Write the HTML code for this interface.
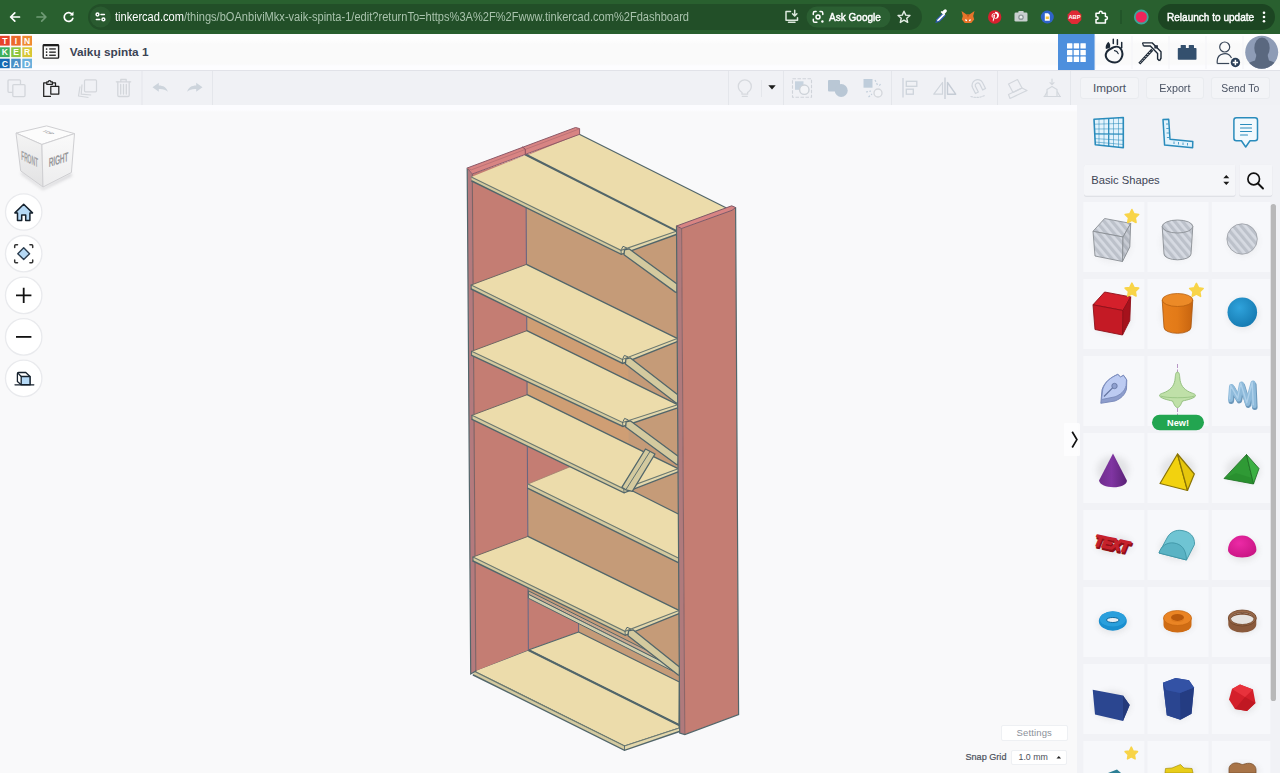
<!DOCTYPE html>
<html lang="en">
<head>
<meta charset="utf-8">
<title>Vaikų spinta 1 - Tinkercad</title>
<style>
*{box-sizing:border-box;margin:0;padding:0}
html,body{width:1280px;height:773px;overflow:hidden;background:#f8f9fb;font-family:"Liberation Sans","DejaVu Sans",sans-serif;}
.abs{position:absolute}
#chrome{position:absolute;left:0;top:0;width:1280px;height:34px;background:#29602f;}
#urlpill{position:absolute;left:88px;top:4px;width:834px;height:26px;border-radius:13px;background:#224f28;}
#urltext{position:absolute;left:115px;top:8px;font-size:12.5px;line-height:18px;color:#fff;white-space:nowrap;transform-origin:0 50%;transform:scaleX(0.886)}
#urltext span{color:#a9c3ad}
#header{position:absolute;left:0;top:34px;width:1280px;height:37px;background:linear-gradient(#fff 0,#fff 4px,#fafafa 10px,#fafafa 30px,#fdfdff 32px,#fdfdff 36px);border-bottom:1px solid #e1e2e8;}
#title{position:absolute;left:69.8px;top:44px;font-size:11.8px;font-weight:bold;color:#3b4354;line-height:16px;white-space:nowrap}
#toolbar{position:absolute;left:0;top:71px;width:1280px;height:34px;background:#f0f1f5;}
.vsep{position:absolute;top:71px;width:1px;height:34px;background:#e6e8ed}
#canvas{position:absolute;left:0;top:105px;width:1077px;height:668px;background:linear-gradient(#fcfcff 0,#fcfcff 5px,#f9f9fa 7px,#f9f9fa 100%);}
#rpanel{position:absolute;left:1077px;top:105px;width:203px;height:668px;background:#f1f2f6;}
.btn{position:absolute;top:77px;height:22px;border:1px solid #e9ebef;border-radius:3px;background:#f3f4f7;font-size:11.7px;color:#4a5263;text-align:center;line-height:20px;}
.btn span{display:inline-block}
.cell{position:absolute;width:61px;height:72px;background:#f7f8fa;}
.circ{position:absolute;left:9px;width:30px;height:30px;border-radius:15px;background:#fff;border:1px solid #e9ebee;box-shadow:0 0 2px rgba(0,0,0,0.05)}
</style>
</head>
<body>
<!-- CHROME BAR -->
<div id="chrome"></div>
<div id="urlpill"></div>
<div id="urltext">tinkercad.com<span>/things/bOAnbiviMkx-vaik-spinta-1/edit?returnTo=https%3A%2F%2Fwww.tinkercad.com%2Fdashboard</span></div>
<svg class="abs" style="left:0;top:0" width="1280" height="34" viewBox="0 0 1280 34">
 <!-- back -->
 <g fill="none" stroke="#fff" stroke-width="1.7" stroke-linecap="round" stroke-linejoin="round">
  <path d="M19.5 17H10.8M14.8 12.8L10.6 17l4.2 4.2"/>
  <path d="M37 17h8.7M41.7 12.8l4.2 4.2-4.2 4.2" stroke="#6f9a75"/>
  <path d="M72.3 14.6a4.400 4.400 0 1 0 0.5 3.800"/>
 </g>
 <path d="M73.500 11.600v3.800h-3.800z" fill="#fff"/>
 <!-- site info -->
 <circle cx="100.5" cy="17" r="10.5" fill="#2a5b30"/>
 <g fill="none" stroke="#fff" stroke-width="1.5" stroke-linecap="round">
  <circle cx="97.500" cy="14.500" r="1.400"/><path d="M101 14.500h3.400"/>
  <circle cx="103.400" cy="19.400" r="1.400"/><path d="M96.400 19.400H99.800"/>
 </g>
 <!-- install -->
 <g fill="none" stroke="#dbe7dc" stroke-width="1.5" stroke-linecap="round" stroke-linejoin="round">
  <path d="M790.5 11.5H786v8.7h11.5v-2.5M788.5 22.3h6.5"/>
  <path d="M794.7 10.3v5.2M792.5 13.7l2.2 2.2 2.2-2.2"/>
 </g>
 <!-- ask google chip -->
 <rect x="806.5" y="6.5" width="84" height="21" rx="10.5" fill="#2b5f32"/>
 <g fill="none" stroke="#fff" stroke-width="1.5" stroke-linecap="round" stroke-linejoin="round">
  <path d="M813.3 14.5v-1.3a1.6 1.6 0 0 1 1.6-1.6h1.2M820 11.6h1.2a1.6 1.6 0 0 1 1.6 1.6v1.3M813.3 19.3v1.4a1.6 1.6 0 0 0 1.6 1.6h2"/>
  <circle cx="818" cy="17" r="2"/>
 </g>
 <circle cx="822.4" cy="21.5" r="1.2" fill="#fff"/>
 <!-- star -->
 <path d="M904 11.2l1.75 3.9 4.2.4-3.2 2.8.95 4.1-3.7-2.2-3.7 2.2.95-4.1-3.2-2.8 4.2-.4z" fill="none" stroke="#e4ede5" stroke-width="1.4" stroke-linejoin="round"/>
 <!-- eyedropper -->
 <g>
  <path d="M936 22.3l1-3 6-6 2.1 2.1-6 6z" fill="#fff" stroke="#2a55a8" stroke-width="1.1"/>
  <path d="M942.3 11.6l1.8-1.8a1.6 1.6 0 0 1 2.3 2.3l-1.8 1.8 0.6 0.6-1.1 1.1-3.5-3.5 1.1-1.1z" fill="#fff"/>
 </g>
 <!-- metamask -->
 <g>
  <path d="M961.5 11l5 3.4h3l5-3.4-1.3 5 1 3.6-3 3.4h-6.4l-3-3.4 1-3.6z" fill="#e8742a"/>
  <path d="M965 19.3l2 .4v1.5l-1.6-.4zM971 19.3l-2 .4v1.5l1.6-.4z" fill="#fff"/>
  <path d="M966.5 14.4h3l-1.5 3z" fill="#c4571b"/>
 </g>
 <!-- pinterest -->
 <circle cx="994.7" cy="17" r="6.7" fill="#d8202f"/>
 <path d="M994.9 13c-2.2 0-3.3 1.5-3.3 2.9 0 .8.3 1.500 1 1.800.1 0 .2 0 .2-.1l.1-.5c0-.1 0-.2-.1-.3-.2-.3-.3-.600-.3-1 0-1.300 1-2.400 2.500-2.400 1.300 0 2.100.8 2.100 1.900 0 1.500-.6 2.700-1.600 2.700-.5 0-.9-.4-.8-1 .1-.6.4-1.300.4-1.700 0-.4-.2-.7-.7-.7-.5 0-1 .6-1 1.300 0 .5.2.8.2.8l-.7 2.900c-.2.900 0 1.900 0 2l.2-.1c.1-.1.800-1.100 1-1.900l.4-1.500c.2.400.8.700 1.400.700 1.800 0 3.100-1.700 3.100-3.900-.1-1.600-1.500-3.200-3.700-3.200z" fill="#fff"/>
 <!-- camera -->
 <g>
  <rect x="1014.5" y="12.6" width="13" height="9" rx="1.3" fill="#c9cfd0"/>
  <rect x="1018.3" y="11" width="5.4" height="2.400" rx=".8" fill="#c9cfd0"/>
  <circle cx="1021" cy="17.200" r="2.800" fill="#8f9a9b"/><circle cx="1021" cy="17.200" r="1.400" fill="#e8ecec"/>
 </g>
 <!-- docs -->
 <circle cx="1047.300" cy="17" r="6.500" fill="#2f63c9"/>
 <path d="M1044.800 13.200h3.300l1.700 1.700v5.900h-5z" fill="#fff"/>
 <rect x="1045.700" y="16.500" width="3.200" height="2.600" fill="#f4c542"/>
 <!-- ABP -->
 <path d="M1071.700 10.500h5.600l4 4v5.600l-4 4h-5.600l-4-4v-5.600z" fill="#e02a35"/>
 <text x="1074.500" y="19.300" font-size="5.800" font-weight="bold" fill="#fff" text-anchor="middle" font-family="Liberation Sans,sans-serif">ABP</text>
 <!-- puzzle -->
 <path d="M1096 13.300h3.200v-.6a1.500 1.500 0 0 1 3 0v.6h3.200v3.300h.5a1.500 1.500 0 0 1 0 3h-.5v3.300H1096v-3.300h.7a1.400 1.400 0 0 0 0-2.800H1096z" fill="none" stroke="#fff" stroke-width="1.500" stroke-linejoin="round"/>
 <!-- sep -->
 <rect x="1120.500" y="10" width="1" height="14" fill="#1d4a24"/>
 <!-- profile -->
 <circle cx="1141.300" cy="17" r="6.500" fill="#f0245a" stroke="#3fa49a" stroke-width="1.800"/>
 <!-- relaunch pill -->
 <rect x="1158" y="4" width="117" height="26" rx="13" fill="#1c4522"/>
 <circle cx="1264" cy="12.700" r="1.300" fill="#fff"/><circle cx="1264" cy="17" r="1.300" fill="#fff"/><circle cx="1264" cy="21.300" r="1.300" fill="#fff"/>
</svg>
<div id="askg" class="abs" style="left:829px;top:8px;font-size:11px;line-height:18px;color:#fff;white-space:nowrap;-webkit-text-stroke:0.45px #fff;transform-origin:0 50%;transform:scaleX(0.913)">Ask Google</div>
<div id="relaunch" class="abs" style="left:1166.5px;top:8px;font-size:11px;line-height:18px;color:#fff;white-space:nowrap;-webkit-text-stroke:0.45px #fff;transform-origin:0 50%;transform:scaleX(0.913)">Relaunch to update</div>


<!-- HEADER -->
<div id="header"></div>
<div id="title">Vaikų spinta 1</div>
<svg class="abs" style="left:0;top:34px" width="1280" height="37" viewBox="0 34 1280 37" font-family="Liberation Sans,sans-serif">
 <!-- logo -->
 <g>
  <rect x="0" y="35.800" width="9.700" height="9.800" fill="#e8432b"/><rect x="11.200" y="35.800" width="9.500" height="9.800" fill="#ec6a2c"/><rect x="22.300" y="35.800" width="9.700" height="9.800" fill="#f08b31"/>
  <rect x="0" y="47.300" width="9.700" height="9.800" fill="#3eae5e"/><rect x="11.200" y="47.300" width="9.500" height="9.800" fill="#8dc53e"/><rect x="22.300" y="47.300" width="9.700" height="9.800" fill="#d8c734"/>
  <rect x="0" y="58.700" width="9.700" height="9.500" fill="#156ab4"/><rect x="11.200" y="58.700" width="9.500" height="9.500" fill="#4a8fc6"/><rect x="22.300" y="58.700" width="9.700" height="9.500" fill="#6bb0dc"/>
  <g font-size="8.600" font-weight="bold" fill="#fff" text-anchor="middle">
   <text x="4.900" y="43.900">T</text><text x="16" y="43.900">I</text><text x="27.200" y="43.900">N</text>
   <text x="4.900" y="55.400">K</text><text x="16" y="55.400">E</text><text x="27.200" y="55.400">R</text>
   <text x="4.900" y="66.600">C</text><text x="16" y="66.600">A</text><text x="27.200" y="66.600">D</text>
  </g>
 </g>
 <!-- list icon -->
 <g>
  <rect x="43.200" y="44.700" width="15.400" height="13.400" rx="0.800" fill="none" stroke="#1f1f1f" stroke-width="1.400"/>
  <rect x="43.200" y="44.400" width="15.400" height="1.900" fill="#1f1f1f"/>
  <g fill="#1f1f1f"><circle cx="46.600" cy="49" r="0.850"/><circle cx="46.600" cy="52.100" r="0.850"/><circle cx="46.600" cy="55.200" r="0.850"/>
  <rect x="49.200" y="48.300" width="6.600" height="1.300"/><rect x="49.200" y="51.500" width="6.600" height="1.300"/><rect x="49.200" y="54.600" width="6.600" height="1.300"/></g>
 </g>
 <!-- right buttons -->
 <rect x="1058" y="34" width="36.600" height="36" fill="#4d8fdd"/>
 <g fill="#fff">
  <rect x="1067" y="43.200" width="5.400" height="5.400" rx=".5"/><rect x="1073.700" y="43.200" width="5.400" height="5.400" rx=".5"/><rect x="1080.400" y="43.200" width="5.400" height="5.400" rx=".5"/>
  <rect x="1067" y="49.900" width="5.400" height="5.400" rx=".5"/><rect x="1073.700" y="49.900" width="5.400" height="5.400" rx=".5"/><rect x="1080.400" y="49.900" width="5.400" height="5.400" rx=".5"/>
  <rect x="1067" y="56.600" width="5.400" height="5.400" rx=".5"/><rect x="1073.700" y="56.600" width="5.400" height="5.400" rx=".5"/><rect x="1080.400" y="56.600" width="5.400" height="5.400" rx=".5"/>
 </g>
 <g fill="#f3f4f7"><rect x="1095" y="36" width="1" height="33"/><rect x="1131.500" y="36" width="1" height="33"/><rect x="1168.500" y="36" width="1" height="33"/><rect x="1205.500" y="36" width="1" height="33"/><rect x="1242.500" y="36" width="1" height="33"/></g>
 <!-- sim lab (apple falling) -->
 <g fill="none" stroke="#1c2836" stroke-linecap="round" stroke-linejoin="round">
  <path d="M1113.900 47.200c2.600-1.200 5.800-.4 7.200 2 1.500 2.700 1.700 6 .4 8.700-1.200 2.600-3.700 4.500-6.500 4.500-2.700 0-5.800-.9-7.600-3-1.800-2.100-2-5.100-.7-7.400 1.400-2.500 4.400-3.500 7.200-4.800z" stroke-width="2"/>
  <path d="M1113.300 39.300v4.300M1117.400 39.800v4.800M1121.700 42.500v5.300" stroke-width="1.500"/>
  <path d="M1114.500 50.600c1.700.3 3.100 1.400 3.700 3" stroke-width="1.200"/>
 </g>
 <path d="M1108.300 41.800c2 1.700 2.500 4 1.400 6.200l-3.800 1c-.8-2.600.3-5 2.400-7.200z" fill="#1c2836"/>
 <!-- pickaxe -->
 <g fill="none" stroke="#1c2836">
  <path d="M1140.300 62.600l11-11.800" stroke-width="2.800" stroke-linecap="square"/>
  <path d="M1140.300 62.600l11-11.800" stroke-width="1" stroke="#fff" stroke-dasharray="1.300 1.300"/>
  <path d="M1142.500 42.900h9.800l8.700 8.800v6.500l-1.500 2.600" stroke-width="1.400" stroke-linejoin="miter"/>
  <path d="M1143.500 46h6.800l7.300 7.500v5.500l1.800 1.800" stroke-width="1.400" stroke-linejoin="miter"/>
  <path d="M1142.500 42.900l1 3.100" stroke-width="1.200"/>
 </g>
 <rect x="1154.300" y="45.200" width="3.600" height="3.300" fill="#2a3444"/>
 <!-- brick -->
 <g fill="#34506e"><rect x="1177.800" y="48" width="18.700" height="11.700" rx=".8"/><rect x="1180.700" y="45" width="5.200" height="4" rx=".5"/><rect x="1188.800" y="45" width="5.200" height="4" rx=".5"/></g>
 <!-- user plus -->
 <g fill="none" stroke="#3a4759" stroke-width="1.200">
  <circle cx="1224.700" cy="47" r="5"/>
  <path d="M1217.200 63.500v-2.500a7.500 7.500 0 0 1 14.300-3"/>
  <path d="M1217.200 63.500h12"/>
 </g>
 <circle cx="1235.400" cy="62.500" r="4.700" fill="#2a3e57"/>
 <path d="M1232.700 62.500h5.400M1235.400 59.800v5.400" stroke="#fff" stroke-width="1.500" fill="none"/>
 <!-- avatar -->
 <defs><clipPath id="avc"><circle cx="1261.700" cy="52.200" r="16.500"/></clipPath></defs>
 <circle cx="1261.700" cy="52.200" r="16.500" fill="#8e9cb6"/>
 <g clip-path="url(#avc)" fill="#5a687f">
  <ellipse cx="1262" cy="48" rx="7.700" ry="10.500"/>
  <path d="M1256.500 55h11l1.500 5.500c4 1.300 8 3 10 6v6h-34v-6c2-3 6-4.700 10-6z"/>
 </g>
</svg>


<!-- TOOLBAR -->
<div id="toolbar"></div>
<svg class="abs" style="left:0;top:71px" width="1280" height="34" viewBox="0 71 1280 34">
 <g fill="#e4e6eb">
  <rect x="141.500" y="71" width="1" height="34"/><rect x="212" y="71" width="1" height="34"/>
  <rect x="728" y="71" width="1" height="34"/><rect x="783" y="71" width="1" height="34"/><rect x="891" y="71" width="1" height="34"/><rect x="997" y="71" width="1" height="34"/><rect x="1070" y="71" width="1" height="34"/>
  <rect x="761" y="80" width="1" height="17"/>
 </g>
 <!-- copy -->
 <g fill="#f0f1f5" stroke="#d3d6db" stroke-width="1.300" stroke-linejoin="round">
  <rect x="8" y="79.800" width="12.500" height="12.500" rx="1"/><rect x="12.800" y="84.600" width="12.200" height="12" rx="1"/>
 </g>
 <!-- paste -->
 <g fill="none" stroke="#222" stroke-width="1.250" stroke-linejoin="round">
  <path d="M46.800 82.800H43.700v13.600h7.300"/><path d="M52.300 82.800h3.200v3.200"/>
  <path d="M46.800 84.300v-2.400h1.500a1.300 1.300 0 0 1 2.600 0h1.500v2.400z"/>
  <rect x="50.800" y="86.300" width="8" height="7.800" fill="#f0f1f5"/>
 </g>
 <!-- duplicate -->
 <g fill="#f0f1f5" stroke="#d3d6db" stroke-width="1.200" stroke-linejoin="round">
  <path d="M80 86.500l-1.500 9.500 10 1.500"/><path d="M82 84.500l-.8 9.700 10 .8" />
  <rect x="84.500" y="79.800" width="12" height="12" rx="1"/>
 </g>
 <!-- trash -->
 <g fill="none" stroke="#d3d6db" stroke-width="1.300" stroke-linejoin="round" stroke-linecap="round">
  <path d="M116.300 81.800h14.400"/><path d="M120.800 81.500v-2h5.400v2"/>
  <path d="M117.800 82v13.300a1.200 1.200 0 0 0 1.200 1.200h9a1.200 1.200 0 0 0 1.200-1.200V82"/>
  <path d="M120.700 84.500v9.500M123.500 84.500v9.500M126.300 84.500v9.500"/>
 </g>
 <!-- undo / redo -->
 <path d="M152.500 87.300l6.300-4.500v2.800c4.500 0 8 2 9 6.200-2.300-2.300-5-3-9-2.800v2.800z" fill="#cdd4dc"/>
 <path d="M202.500 87.300l-6.300-4.500v2.800c-4.500 0-8 2-9 6.200 2.300-2.300 5-3 9-2.800v2.800z" fill="#cdd4dc"/>
 <!-- bulb -->
 <g fill="none" stroke="#d6d9de" stroke-width="1.300" stroke-linecap="round">
  <path d="M742 92.500c-2.300-1.500-3.700-3.500-3.700-6.200a6.500 6.500 0 0 1 13 0c0 2.700-1.400 4.700-3.700 6.200v1.700h-5.600z"/>
  <path d="M742.300 96.300h5"/>
 </g>
 <path d="M768.300 85.200h7.400l-3.700 4.200z" fill="#1b1b1b"/>
 <!-- group -->
 <rect x="792.500" y="78.700" width="19" height="18.500" fill="none" stroke="#d0d4da" stroke-width="1.100" stroke-dasharray="3.500 1.500"/>
 <rect x="795" y="81.300" width="8.500" height="8.500" fill="#c7d3df"/>
 <circle cx="804.300" cy="89.700" r="4.700" fill="#f3f4f7" stroke="#cdd2d8" stroke-width="1.400"/>
 <!-- union -->
 <rect x="828" y="80" width="12" height="11.500" rx="1" fill="#b9c7d5"/><circle cx="841.200" cy="90.500" r="6.500" fill="#b9c7d5"/>
 <!-- ungroup -->
 <rect x="863.500" y="79" width="9" height="8.700" fill="#bfcddb"/>
 <circle cx="878" cy="93" r="4" fill="#f3f4f7" stroke="#d3d6db" stroke-width="1.300"/>
 <g stroke="#c3cfdb" stroke-width="1.200" stroke-dasharray="2 1.500" fill="none"><path d="M875 80l2.500 5M880.500 84l-2 3M866 92l5-1M868.500 97l3.500-3"/></g>
 <!-- align -->
 <g fill="none" stroke="#cdd3db" stroke-width="1.300"><path d="M903 78v19.500"/><rect x="906.300" y="81.300" width="10.500" height="5"/><rect x="906.300" y="89.200" width="7" height="5"/></g>
 <!-- mirror -->
 <g fill="none" stroke="#d0d5dc" stroke-width="1.200" stroke-linejoin="round"><path d="M945 77.500v21.500" stroke="#c9cfd7" stroke-width="1.400"/><path d="M942.500 82.500v11.700h-8.700z"/><path d="M947.500 82.500v11.700h8.200z" stroke="#c5ccd5" stroke-width="1.400"/></g>
 <!-- magnet -->
 <g fill="none" stroke="#d0d5dc" stroke-width="1.200" stroke-linecap="round"><path d="M975.500 93.500l-3-6a5.600 5.600 0 0 1 10-5l3 6-2.800 1.400-3-6a2.500 2.500 0 0 0-4.400 2.200l3 6z"/><path d="M971 96.500c4 1.500 9 1.300 13.500-1" stroke-dasharray="1.500 1.500"/></g>
 <!-- cruise -->
 <g fill="none" stroke="#d3d7dd" stroke-width="1.200" stroke-linejoin="round"><path d="M1008.500 84l9-4.500 4.500 8.500-9 4.500z"/><path d="M1022 88l5 2.500-17 8-1.500-4z"/></g>
 <!-- drop -->
 <g fill="none" stroke="#d3d7dd" stroke-width="1.200" stroke-linejoin="round" stroke-linecap="round"><path d="M1052 79v5.500M1050 82.700l2 2 2-2"/><path d="M1047 96v-6.500l5-3 5 3V96"/><path d="M1044 96.500h16.500M1044.500 96.500l2.500-4.500M1060 96.500l-2.500-4.500"/></g>
</svg>
<div class="btn" style="left:1080px;width:59px"><span>Import</span></div>
<div class="btn" style="left:1146px;width:58px"><span style="transform:scaleX(0.92)">Export</span></div>
<div class="btn" style="left:1211px;width:59px"><span style="transform:scaleX(0.89)">Send To</span></div>


<!-- CANVAS -->
<div id="canvas"></div>
<svg class="abs" style="left:0;top:0" width="1280" height="773" viewBox="0 0 1280 773"><polygon points="575.5,134.0 676.5,231.0 679.7,727.0 578.6,632.0" fill="#c59b78"  />
<polygon points="525.9,155.0 575.5,134.0 578.6,632.0 528.4,650.0" fill="#c47d73"  />
<polyline points="578.4,600.0 578.6,632.0" fill="none" stroke="#6a6680" stroke-width="1.0" stroke-linecap="round"/>
<polygon points="528.4,650.0 578.6,632.0 679.4,682.0 679.0,725.0" fill="#ecdcab" stroke="#52666a" stroke-width="1.3" stroke-linejoin="round" />
<polygon points="473.7,671.0 528.4,650.0 679.0,725.0 679.3,728.0 624.5,746.0" fill="#ecdcab" stroke="#52666a" stroke-width="1.3" stroke-linejoin="round" />
<polyline points="528.4,650.0 679.0,725.0" fill="none" stroke="#52666a" stroke-width="2.0" stroke-linecap="round"/>
<polygon points="473.7,671.0 624.5,746.0 624.5,750.3 473.2,675.0" fill="#d4ca9f"  />
<polygon points="624.5,746.0 679.3,728.0 679.3,731.5 624.5,750.3" fill="#e3d7ab"  />
<polyline points="473.7,671.0 624.5,746.0 679.3,728.0" fill="none" stroke="#6c7a72" stroke-width="1.1" stroke-linecap="round"/>
<polyline points="473.2,675.0 624.5,750.3 679.3,731.5" fill="none" stroke="#52666a" stroke-width="1.4" stroke-linecap="round"/>
<polyline points="624.5,746.0 624.5,750.3" fill="none" stroke="#52666a" stroke-width="0.9" stroke-linecap="round"/>
<polygon points="525.9,155.0 676.5,231.0 678.1,473.0 527.1,396.0" fill="#c59b78"  />
<polygon points="527.6,488.0 678.7,562.0 679.3,669.0 528.2,594.0" fill="#c59b78"  />
<polygon points="526.8,316.3 622.4,363.4 628.4,367.6 628.4,380.5 526.8,330.7" fill="#cf9e74"  />
<polygon points="527.1,381.4 622.6,426.4 628.6,430.6 628.6,444.5 527.1,394.7" fill="#cf9e74"  />
<polygon points="472.3,174.0 525.9,155.0 528.4,650.0 475.5,671.0" fill="#c47d73"  />
<polyline points="526.0,180.0 528.4,650.0" fill="none" stroke="#6a6680" stroke-width="1.1" stroke-linecap="round"/>
<polygon points="467.2,168.0 472.3,174.0 475.8,671.0 470.7,674.0" fill="#b47a7d"  />
<polyline points="472.3,174.0 475.8,671.0" fill="none" stroke="#7c6466" stroke-width="1.1" stroke-linecap="round"/>
<polyline points="467.2,168.0 470.7,674.0 475.8,671.0" fill="none" stroke="#52666a" stroke-width="1.2" stroke-linecap="round"/>
<polygon points="528.4,590.8 678.5,666.3 678.5,670.0 528.4,594.3" fill="#c9a78e" stroke="#52666a" stroke-width="1.0" stroke-linejoin="round" />
<polygon points="528.4,594.3 678.5,670.0 678.5,674.0 528.4,598.2" fill="#d2cfae" stroke="#52666a" stroke-width="1.0" stroke-linejoin="round" />
<polygon points="528.0,484.0 578.0,463.5 678.3,514.0 678.3,558.0" fill="#ecdcab"  />
<polyline points="578.0,463.5 678.3,514.0" fill="none" stroke="#52666a" stroke-width="1.2" stroke-linecap="round"/>
<polyline points="528.0,484.0 578.0,463.5" fill="none" stroke="#a0806e" stroke-width="0.8" stroke-linecap="round"/>
<polygon points="528.0,484.0 678.3,558.0 678.3,562.6 528.0,488.3" fill="#d4ca9f"  />
<polyline points="528.0,484.0 678.3,558.0" fill="none" stroke="#6c7a72" stroke-width="1.1" stroke-linecap="round"/>
<polyline points="528.0,488.3 678.3,562.6" fill="none" stroke="#52666a" stroke-width="1.4" stroke-linecap="round"/>
<polygon points="473.0,557.0 527.9,536.4 679.0,610.4 625.0,631.3" fill="#ecdcab"  />
<polyline points="527.9,536.4 679.0,610.4" fill="none" stroke="#52666a" stroke-width="1.3" stroke-linecap="round"/>
<polyline points="473.0,557.0 527.9,536.4" fill="none" stroke="#6f6763" stroke-width="1.0" stroke-linecap="round"/>
<polygon points="473.0,557.0 625.0,631.3 625.3,635.3 473.0,561.0" fill="#d4ca9f"  />
<polygon points="625.0,631.3 679.0,610.4 679.0,613.6 625.3,635.3" fill="#e3d7ab"  />
<polyline points="473.0,557.0 625.0,631.3 679.0,610.4" fill="none" stroke="#6c7a72" stroke-width="1.1" stroke-linecap="round"/>
<polyline points="473.0,561.0 625.3,635.3 679.0,613.6" fill="none" stroke="#52666a" stroke-width="1.4" stroke-linecap="round"/>
<polyline points="473.0,557.0 473.0,561.0" fill="none" stroke="#52666a" stroke-width="1.0" stroke-linecap="round"/>
<polyline points="625.0,631.3 625.3,635.3" fill="none" stroke="#52666a" stroke-width="0.9" stroke-linecap="round"/>
<polygon points="628.0,635.8 628.5,630.8 633.0,629.8 679.8,667.3 679.4,675.3 677.9,674.8" fill="#d4ca9f" stroke="#52666a" stroke-width="1.3" stroke-linejoin="round" />
<polyline points="625.5,630.3 627.0,627.3 630.5,628.8" fill="none" stroke="#52666a" stroke-width="1.0" stroke-linecap="round"/>
<polygon points="472.0,415.3 527.1,394.7 678.1,468.7 623.8,488.8" fill="#ecdcab"  />
<polyline points="527.1,394.7 678.1,468.7" fill="none" stroke="#52666a" stroke-width="1.3" stroke-linecap="round"/>
<polyline points="472.0,415.3 527.1,394.7" fill="none" stroke="#6f6763" stroke-width="1.0" stroke-linecap="round"/>
<polygon points="472.0,415.3 623.8,488.8 624.1,492.8 472.0,419.3" fill="#d4ca9f"  />
<polygon points="623.8,488.8 678.1,468.7 678.1,471.9 624.1,492.8" fill="#e3d7ab"  />
<polyline points="472.0,415.3 623.8,488.8 678.1,468.7" fill="none" stroke="#6c7a72" stroke-width="1.1" stroke-linecap="round"/>
<polyline points="472.0,419.3 624.1,492.8 678.1,471.9" fill="none" stroke="#52666a" stroke-width="1.4" stroke-linecap="round"/>
<polyline points="472.0,415.3 472.0,419.3" fill="none" stroke="#52666a" stroke-width="1.0" stroke-linecap="round"/>
<polyline points="623.8,488.8 624.1,492.8" fill="none" stroke="#52666a" stroke-width="0.9" stroke-linecap="round"/>
<polygon points="471.6,351.3 526.8,330.7 677.6,404.7 622.6,422.4" fill="#ecdcab"  />
<polyline points="526.8,330.7 677.6,404.7" fill="none" stroke="#52666a" stroke-width="1.3" stroke-linecap="round"/>
<polyline points="471.6,351.3 526.8,330.7" fill="none" stroke="#6f6763" stroke-width="1.0" stroke-linecap="round"/>
<polygon points="471.6,351.3 622.6,422.4 622.9,426.4 471.6,355.3" fill="#d4ca9f"  />
<polygon points="622.6,422.4 677.6,404.7 677.6,407.9 622.9,426.4" fill="#e3d7ab"  />
<polyline points="471.6,351.3 622.6,422.4 677.6,404.7" fill="none" stroke="#6c7a72" stroke-width="1.1" stroke-linecap="round"/>
<polyline points="471.6,355.3 622.9,426.4 677.6,407.9" fill="none" stroke="#52666a" stroke-width="1.4" stroke-linecap="round"/>
<polyline points="471.6,351.3 471.6,355.3" fill="none" stroke="#52666a" stroke-width="1.0" stroke-linecap="round"/>
<polyline points="622.6,422.4 622.9,426.4" fill="none" stroke="#52666a" stroke-width="0.9" stroke-linecap="round"/>
<polygon points="471.2,285.0 526.4,264.4 677.2,338.4 622.4,359.4" fill="#ecdcab"  />
<polyline points="526.4,264.4 677.2,338.4" fill="none" stroke="#52666a" stroke-width="1.3" stroke-linecap="round"/>
<polyline points="471.2,285.0 526.4,264.4" fill="none" stroke="#6f6763" stroke-width="1.0" stroke-linecap="round"/>
<polygon points="471.2,285.0 622.4,359.4 622.7,363.4 471.2,289.0" fill="#d4ca9f"  />
<polygon points="622.4,359.4 677.2,338.4 677.2,341.6 622.7,363.4" fill="#e3d7ab"  />
<polyline points="471.2,285.0 622.4,359.4 677.2,338.4" fill="none" stroke="#6c7a72" stroke-width="1.1" stroke-linecap="round"/>
<polyline points="471.2,289.0 622.7,363.4 677.2,341.6" fill="none" stroke="#52666a" stroke-width="1.4" stroke-linecap="round"/>
<polyline points="471.2,285.0 471.2,289.0" fill="none" stroke="#52666a" stroke-width="1.0" stroke-linecap="round"/>
<polyline points="622.4,359.4 622.7,363.4" fill="none" stroke="#52666a" stroke-width="0.9" stroke-linecap="round"/>
<polygon points="528.0,155.0 579.3,134.3 726.0,207.7 676.5,231.0" fill="#ecdcab"  />
<polyline points="579.3,134.3 726.0,207.7" fill="none" stroke="#52666a" stroke-width="1.2" stroke-linecap="round"/>
<polygon points="471.3,177.0 525.0,155.3 676.3,231.3 621.0,250.3" fill="#ecdcab"  />
<polygon points="471.3,177.0 621.0,250.3 621.3,254.3 471.8,181.0" fill="#d4ca9f"  />
<polygon points="621.0,250.3 676.3,231.3 676.3,234.5 621.3,254.3" fill="#e3d7ab"  />
<polyline points="471.3,177.0 621.0,250.3 676.3,231.3" fill="none" stroke="#6c7a72" stroke-width="1.1" stroke-linecap="round"/>
<polyline points="471.8,181.0 621.3,254.3 676.3,234.5" fill="none" stroke="#52666a" stroke-width="1.4" stroke-linecap="round"/>
<polyline points="621.0,250.3 621.3,254.3" fill="none" stroke="#52666a" stroke-width="0.9" stroke-linecap="round"/>
<polyline points="525.5,154.5 676.3,230.8" fill="none" stroke="#52666a" stroke-width="2.0" stroke-linecap="round"/>
<polygon points="625.6,426.9 626.1,421.9 630.6,420.9 678.5,456.4 678.0,464.9 676.5,464.4" fill="#d4ca9f" stroke="#52666a" stroke-width="1.3" stroke-linejoin="round" />
<polyline points="623.1,421.4 624.6,418.4 628.1,419.9" fill="none" stroke="#52666a" stroke-width="1.0" stroke-linecap="round"/>
<polygon points="621.8,487.3 645.5,449.0 655.0,454.0 632.3,491.3 625.8,489.8" fill="#d4ca9f" stroke="#52666a" stroke-width="1.3" stroke-linejoin="round" />
<polyline points="625.8,489.8 650.0,451.5" fill="none" stroke="#52666a" stroke-width="0.9" stroke-linecap="round"/>
<polygon points="625.4,363.9 625.9,358.9 630.4,357.9 678.1,394.9 677.6,403.4 676.1,402.9" fill="#d4ca9f" stroke="#52666a" stroke-width="1.3" stroke-linejoin="round" />
<polyline points="622.9,358.4 624.4,355.4 627.9,356.9" fill="none" stroke="#52666a" stroke-width="1.0" stroke-linecap="round"/>
<polygon points="624.0,254.8 624.5,249.8 629.0,248.8 677.4,284.3 676.9,292.6 675.4,292.1" fill="#d4ca9f" stroke="#52666a" stroke-width="1.3" stroke-linejoin="round" />
<polyline points="621.5,249.3 623.0,246.3 626.5,247.8" fill="none" stroke="#52666a" stroke-width="1.0" stroke-linecap="round"/>
<polygon points="681.6,228.5 732.0,210.0 735.6,207.5 738.6,714.6 684.8,734.5" fill="#c47d73"  />
<polygon points="676.5,226.0 681.6,228.5 684.8,734.5 679.7,733.0" fill="#b07a7c"  />
<polyline points="681.6,228.5 684.8,734.5" fill="none" stroke="#8c6668" stroke-width="1.1" stroke-linecap="round"/>
<polyline points="676.5,226.0 679.7,733.0 684.8,734.5 738.6,714.6 735.6,207.5" fill="none" stroke="#52666a" stroke-width="1.2" stroke-linecap="round"/>
<polygon points="676.5,226.0 731.7,205.8 735.6,207.5 732.0,210.3 681.6,228.5" fill="#d88483" stroke="#7d5a68" stroke-width="1.0" stroke-linejoin="round" />
<polygon points="467.2,168.0 575.5,127.5 579.6,128.6 579.6,134.3 472.3,174.0" fill="#d88483" stroke="#8c5a68" stroke-width="1.0" stroke-linejoin="round" />
<polyline points="467.5,168.5 471.5,169.8 579.6,128.8" fill="none" stroke="#b56e72" stroke-width="0.8" stroke-linecap="round"/>
<polyline points="522.5,147.0 525.3,149.3 525.3,154.0" fill="none" stroke="#8a4f5e" stroke-width="1.0" stroke-linecap="round"/></svg>
<svg class="abs" style="left:0;top:110px" width="100" height="300" viewBox="0 110 100 300" font-family="Liberation Sans,sans-serif">
 <defs>
  <linearGradient id="cf" x1="0" y1="0" x2="0" y2="1"><stop offset="0" stop-color="#f4f4f4"/><stop offset="1" stop-color="#e2e2e3"/></linearGradient>
  <linearGradient id="cr" x1="0" y1="0" x2="0" y2="1"><stop offset="0" stop-color="#fafafa"/><stop offset="1" stop-color="#ededee"/></linearGradient>
  <filter id="cubesh" x="-20%" y="-20%" width="140%" height="140%"><feGaussianBlur stdDeviation="1.500"/></filter>
 </defs>
 <!-- view cube -->
 <path d="M21.500 171.500L43 188l28.500-15 .5 3-29 14-22-16z" fill="#c9c9cc" filter="url(#cubesh)" opacity=".8"/>
 <polygon points="16,133.100 46.600,125.900 74.500,133.600 41.900,144.500" fill="#fcfcfc" stroke="#cfcfd2" stroke-width="1" stroke-linejoin="round"/>
 <polygon points="16,133.100 41.900,144.500 43,187 20.700,170.900" fill="url(#cf)" stroke="#cfcfd2" stroke-width="1" stroke-linejoin="round"/>
 <polygon points="41.900,144.500 74.500,133.600 71.400,172.500 43,187" fill="url(#cr)" stroke="#cfcfd2" stroke-width="1" stroke-linejoin="round"/>
 <text transform="matrix(0.72 0.34 0.02 1.86 21.2 159.5)" font-size="7" font-weight="bold" fill="#a0a0a2" letter-spacing="-0.200">FRONT</text>
 <text transform="matrix(0.94 -0.30 -0.02 1.86 48.7 167.3)" font-size="7" font-weight="bold" fill="#97979a" letter-spacing="-0.200">RIGHT</text>
 <text transform="matrix(0.800 0.260 -0.900 0.300 41.500 131.500)" font-size="6" font-weight="bold" fill="#a8a8aa">TOP</text>
 <!-- circle buttons -->
 <g fill="#fff" stroke="#e9eaed" stroke-width="1.300">
  <circle cx="23.700" cy="212" r="18.200"/><circle cx="23.700" cy="253.700" r="18.200"/><circle cx="23.700" cy="295.400" r="18.200"/><circle cx="23.700" cy="336.900" r="18.200"/><circle cx="23.700" cy="378.400" r="18.200"/>
 </g>
 <!-- home -->
 <path d="M23.700 204.200l8.800 8.700h-2.600v7.600h-4.200v-5.400h-4v5.400h-4.200v-7.600h-2.600z" fill="#b5d9f6" stroke="#16222e" stroke-width="1.500" stroke-linejoin="round"/>
 <!-- fit -->
 <path d="M23.700 247.800l5.900 5.900-5.900 5.900-5.900-5.900z" fill="#b5d9f6" stroke="#2c3e50" stroke-width="1.400" stroke-linejoin="round"/>
 <g fill="none" stroke="#333" stroke-width="1.500" stroke-linecap="round" stroke-linejoin="round">
  <path d="M14.700 247.500v-1.800a1 1 0 0 1 1-1h1.800M29.900 244.700h1.800a1 1 0 0 1 1 1v1.800M32.700 259.900v1.800a1 1 0 0 1-1 1h-1.800M17.500 262.700h-1.800a1 1 0 0 1-1-1v-1.800"/>
 </g>
 <!-- plus minus -->
 <path d="M16 295.400h15.400M23.700 287.700v15.400" stroke="#111" stroke-width="1.800" fill="none"/>
 <path d="M16 336.900h15.400" stroke="#111" stroke-width="1.800" fill="none"/>
 <!-- cube -->
 <g stroke="#16222e" stroke-width="1.300" stroke-linejoin="round">
  <path d="M17.400 373.700c0-.7.500-1.200 1.200-1.200h7.200l4.200 4v8.200h-8.800l-3.800-3.200z" fill="#fff"/>
  <rect x="21.200" y="376.500" width="8.800" height="8.200" fill="#b5d9f6"/>
  <path d="M17.600 372.900l3.600 3.600" fill="none"/>
  <path d="M15 384.800h18.800" fill="none" stroke-linecap="round"/>
 </g>
</svg>


<!-- RIGHT PANEL -->
<div id="rpanel"></div>
<svg class="abs" style="left:1060px;top:105px" width="220" height="668" viewBox="1060 105 220 668" font-family="Liberation Sans,sans-serif">
<defs>
<pattern id="hs" width="6" height="6" patternUnits="userSpaceOnUse" patternTransform="rotate(50)"><rect width="6" height="6" fill="#bcc1ca"/><rect width="6" height="2.800" fill="#d6dae2"/></pattern>
<pattern id="hs2" width="6" height="6" patternUnits="userSpaceOnUse" patternTransform="rotate(50)"><rect width="6" height="6" fill="#b0b5be"/><rect width="6" height="2.800" fill="#c8ccd4"/></pattern>
<radialGradient id="gsph" cx="0.400" cy="0.350" r="0.700"><stop offset="0" stop-color="#2fa3dc"/><stop offset="1" stop-color="#1579b0"/></radialGradient>
<radialGradient id="gmag" cx="0.400" cy="0.350" r="0.800"><stop offset="0" stop-color="#ec2aa6"/><stop offset="1" stop-color="#c4127f"/></radialGradient>
<linearGradient id="gcyl" x1="0" x2="1"><stop offset="0" stop-color="#e8801c"/><stop offset="0.500" stop-color="#e27a18"/><stop offset="1" stop-color="#c7640f"/></linearGradient>
<linearGradient id="gcone" x1="0" x2="1"><stop offset="0" stop-color="#6f2d8d"/><stop offset="0.450" stop-color="#8035a2"/><stop offset="1" stop-color="#5a2176"/></linearGradient>
<filter id="sh" x="-30%" y="-30%" width="160%" height="160%"><feGaussianBlur stdDeviation="3"/></filter>
<filter id="sh1" x="-30%" y="-30%" width="160%" height="160%"><feGaussianBlur stdDeviation="0.800"/></filter>
</defs>
<rect x="1083.3" y="202.0" width="61.0" height="70" fill="#f7f8fb"/>
<rect x="1147.5" y="202.0" width="61.0" height="70" fill="#f7f8fb"/>
<rect x="1211.8" y="202.0" width="58.5" height="70" fill="#f7f8fb"/>
<rect x="1083.3" y="279.0" width="61.0" height="70" fill="#f7f8fb"/>
<rect x="1147.5" y="279.0" width="61.0" height="70" fill="#f7f8fb"/>
<rect x="1211.8" y="279.0" width="58.5" height="70" fill="#f7f8fb"/>
<rect x="1083.3" y="356.0" width="61.0" height="70" fill="#f7f8fb"/>
<rect x="1147.5" y="356.0" width="61.0" height="70" fill="#f7f8fb"/>
<rect x="1211.8" y="356.0" width="58.5" height="70" fill="#f7f8fb"/>
<rect x="1083.3" y="433.0" width="61.0" height="70" fill="#f7f8fb"/>
<rect x="1147.5" y="433.0" width="61.0" height="70" fill="#f7f8fb"/>
<rect x="1211.8" y="433.0" width="58.5" height="70" fill="#f7f8fb"/>
<rect x="1083.3" y="510.0" width="61.0" height="70" fill="#f7f8fb"/>
<rect x="1147.5" y="510.0" width="61.0" height="70" fill="#f7f8fb"/>
<rect x="1211.8" y="510.0" width="58.5" height="70" fill="#f7f8fb"/>
<rect x="1083.3" y="587.0" width="61.0" height="70" fill="#f7f8fb"/>
<rect x="1147.5" y="587.0" width="61.0" height="70" fill="#f7f8fb"/>
<rect x="1211.8" y="587.0" width="58.5" height="70" fill="#f7f8fb"/>
<rect x="1083.3" y="664.0" width="61.0" height="70" fill="#f7f8fb"/>
<rect x="1147.5" y="664.0" width="61.0" height="70" fill="#f7f8fb"/>
<rect x="1211.8" y="664.0" width="58.5" height="70" fill="#f7f8fb"/>
<rect x="1083.3" y="741.0" width="61.0" height="70" fill="#f7f8fb"/>
<rect x="1147.5" y="741.0" width="61.0" height="70" fill="#f7f8fb"/>
<rect x="1211.8" y="741.0" width="58.5" height="70" fill="#f7f8fb"/>
<g stroke="#2a8cbc" fill="#e3f3fc" stroke-linejoin="round">
<polygon points="1094,119.300 1123.300,117.500 1123.300,147.700 1095.300,144.800" stroke-width="1.600"/>
<g stroke-width="0.550" fill="none"><path d="M1099 119v26.200M1104 118.700v27M1113.500 118.100v28.500M1118.500 117.800v29.400M1094.300 124.200l29-.8M1094.500 129l28.800-.2M1094.900 138.600l28.400 1.700M1095.100 142l28.200 2.500"/></g>
<g stroke-width="1.300" fill="none"><path d="M1108.700 118.400v27.800M1094.700 133.800l28.600.4"/></g>
</g>
<g stroke="#2a8cbc" fill="#e3f3fc" stroke-linejoin="round">
<path d="M1163 119.600l5.700-.3 1.300 20 22.800 2.200-.2 6.300-28-2.700z" stroke-width="1.500"/>
<g stroke-width="0.800" fill="none"><path d="M1166 124h2.500M1166.300 128.500h2.500M1166.600 133h2.500M1166.900 137.500h2.500M1174 144v-2.500M1178.500 144.500v-2.500M1183 145v-2.500M1187.500 145.500v-2.500"/></g>
</g>
<g stroke="#2a8cbc" fill="none" stroke-linejoin="round" stroke-linecap="round">
<path d="M1236.500 117.800h18.500a2.500 2.500 0 0 1 2.500 2.500v18a2.500 2.500 0 0 1-2.500 2.500h-5l-4.300 6.200-4.300-6.200h-5a2.500 2.500 0 0 1-2.500-2.500v-18a2.500 2.500 0 0 1 2.500-2.500z" stroke-width="1.500" fill="#f2f9fd"/>
<path d="M1240.500 124.500h11M1240.500 128h11M1240.500 131.500h11M1240.500 135h7" stroke-width="1.100"/>
</g>
<rect x="1084" y="164.800" width="151.500" height="32" rx="2" fill="#d9dbe1"/><rect x="1084" y="164.500" width="151.500" height="31.300" rx="2" fill="#f5f6f9"/>
<rect x="1239.300" y="164.800" width="33" height="32" rx="2" fill="#d9dbe1"/><rect x="1239.300" y="164.500" width="33" height="31.300" rx="2" fill="#f5f6f9"/>
<text x="1091.300" y="184.300" font-size="11.200" fill="#3d4555">Basic Shapes</text>
<path d="M1223.300 178.200l3-3.300 3 3.300zM1223.300 181.800l3 3.300 3-3.300z" fill="#1a1a1a"/>
<circle cx="1253.700" cy="179" r="5.800" fill="none" stroke="#111" stroke-width="1.700"/><path d="M1258 183.500l5 5" stroke="#111" stroke-width="1.900" stroke-linecap="round"/>
<ellipse cx="1112.0" cy="245.0" rx="19.0" ry="17.0" fill="#555" opacity="0.07" filter="url(#sh)"/>
<polygon points="1093.0,231.3 1104.6,218.5 1130.7,223.4 1123.0,237.0" fill="url(#hs)" stroke="#8a8e94" stroke-width="0.900" stroke-linejoin="round"/>
<polygon points="1093.0,231.3 1123.0,237.0 1122.5,261.5 1095.0,256.0" fill="url(#hs)" stroke="#8a8e94" stroke-width="0.900" stroke-linejoin="round"/>
<polygon points="1123.0,237.0 1130.7,223.4 1129.8,247.0 1122.5,261.5" fill="url(#hs2)" stroke="#8a8e94" stroke-width="0.900" stroke-linejoin="round"/>
<polygon points="1131.9,209.5 1134.0,213.8 1138.7,214.5 1135.3,217.8 1136.1,222.5 1131.9,220.3 1127.7,222.5 1128.5,217.8 1125.1,214.5 1129.8,213.8" fill="#f8d448" stroke="#f8d448" stroke-width="1.500" stroke-linejoin="round"/>
<ellipse cx="1178.0" cy="243.0" rx="17.0" ry="17.0" fill="#555" opacity="0.07" filter="url(#sh)"/>
<path d="M1162.200 226.500l1.800 27.500a13.500 5.800 0 0 0 27 0l1.800-27.500z" fill="url(#hs)" stroke="#8a8e94" stroke-width="0.900"/>
<ellipse cx="1177.500" cy="226.500" rx="15.300" ry="6.500" fill="url(#hs)" stroke="#8a8e94" stroke-width="0.900"/>
<ellipse cx="1243.0" cy="241.0" rx="15.0" ry="15.0" fill="#555" opacity="0.07" filter="url(#sh)"/>
<circle cx="1242.100" cy="239" r="15.200" fill="url(#hs)" stroke="#9a9ea4" stroke-width="0.800"/>
<ellipse cx="1112.0" cy="318.0" rx="19.0" ry="17.0" fill="#555" opacity="0.09" filter="url(#sh)"/>
<polygon points="1093.0,304.8 1104.6,292.0 1130.7,296.9 1123.0,310.5" fill="#d4202b" stroke="#8f1019" stroke-width="0.900" stroke-linejoin="round"/>
<polygon points="1093.0,304.8 1123.0,310.5 1122.5,335.0 1095.0,329.5" fill="#c41a25" stroke="#8f1019" stroke-width="0.900" stroke-linejoin="round"/>
<polygon points="1123.0,310.5 1130.7,296.9 1129.8,320.5 1122.5,335.0" fill="#a5121c" stroke="#8f1019" stroke-width="0.900" stroke-linejoin="round"/>
<polygon points="1131.9,283.1 1134.0,287.4 1138.7,288.1 1135.3,291.4 1136.1,296.1 1131.9,293.9 1127.7,296.1 1128.5,291.4 1125.1,288.1 1129.8,287.4" fill="#f8d448" stroke="#f8d448" stroke-width="1.500" stroke-linejoin="round"/>
<ellipse cx="1178.0" cy="316.0" rx="17.0" ry="17.0" fill="#555" opacity="0.09" filter="url(#sh)"/>
<path d="M1162.200 300l1.800 27.500a13.500 5.800 0 0 0 27 0l1.800-27.500z" fill="url(#gcyl)" stroke="#a9560d" stroke-width="0.800"/>
<ellipse cx="1177.500" cy="300" rx="15.300" ry="6.500" fill="#ec8a27" stroke="#b9610f" stroke-width="0.800"/>
<polygon points="1196.4,283.4 1198.5,287.7 1203.2,288.4 1199.8,291.7 1200.6,296.4 1196.4,294.2 1192.2,296.4 1193.0,291.7 1189.6,288.4 1194.3,287.7" fill="#f8d448" stroke="#f8d448" stroke-width="1.500" stroke-linejoin="round"/>
<ellipse cx="1243.0" cy="314.0" rx="15.0" ry="15.0" fill="#555" opacity="0.11" filter="url(#sh)"/>
<circle cx="1242.300" cy="312.300" r="14.800" fill="url(#gsph)"/>
<path d="M1100.800 403.300l1.200-13.500c2.500-8 8.500-12.300 15.800-15.500l2.700 2.600 3-1.700 3.300 4.800-.3 9c-1.500 6-5.500 9.500-11.500 12z" fill="#8d9dcc" stroke="#7586b8" stroke-width="0.900" stroke-linejoin="round"/>
<path d="M1101.500 399.500l1.300-10.500c2.500-7.500 8-11.500 15-14.500l2.700 2.500 3-1.600 3 4.300-.4 5.800c-1.500 5.700-5.300 9-11 11.300z" fill="#bccbf2" stroke="#7586b8" stroke-width="0.800" stroke-linejoin="round"/>
<path d="M1104 396.500l9.800-9.800" stroke="#62739f" stroke-width="1.200"/><circle cx="1114.500" cy="386" r="2.700" fill="#8fa0cf" stroke="#62739f" stroke-width="0.800"/>
<path d="M1177.500 364v60" stroke="#b08ac0" stroke-width="0.900" stroke-dasharray="4 1.500"/>
<path d="M1177.500 372c1.600 0 2 2 2.300 6 .6 7 3.500 11 10 14.200 4 1.500 5.700 2 5.700 3.300 0 2.500-8 4.500-13 5.500-1.500 3-2.700 6.500-5 6.500s-3.500-3.500-5-6.500c-5-1-13-3-13-5.500 0-1.300 1.700-1.800 5.700-3.300 6.500-3.200 9.400-7.200 10-14.200.3-4 .7-6 2.300-6z" fill="#bfe0a8" stroke="#8dbb78" stroke-width="0.900"/>
<path d="M1160.500 396c5 2.300 29 2.300 34 0" stroke="#8dbb78" stroke-width="0.700" fill="none"/>
<rect x="1152" y="414.800" width="52" height="15.400" rx="7.700" fill="#22a550"/>
<text x="1178" y="425.800" font-size="9.200" font-weight="bold" fill="#fff" text-anchor="middle">New!</text>
<path d="M1230.500 399.500L1231.500 386.500L1238.500 399L1241.500 384L1247.500 403.500L1253 383L1254 405.500" transform="translate(0.800 1.600)" fill="none" stroke="#6b97ba" stroke-width="5.600" stroke-linejoin="round" stroke-linecap="round"/>
<path d="M1230.500 399.500L1231.500 386.500L1238.500 399L1241.500 384L1247.500 403.500L1253 383L1254 405.500" fill="none" stroke="#8fbbdb" stroke-width="5" stroke-linejoin="round" stroke-linecap="round"/>
<path d="M1230.500 399.500L1231.500 386.500L1238.500 399L1241.500 384L1247.500 403.500L1253 383L1254 405.500" transform="translate(-0.800 -0.800)" fill="none" stroke="#aed0ea" stroke-width="1.400" stroke-linejoin="round" stroke-linecap="round"/>
<ellipse cx="1113.0" cy="470.0" rx="16.0" ry="14.0" fill="#555" opacity="0.13" filter="url(#sh)"/>
<path d="M1113 453.500l-14 27c1 4.500 7 6.700 14.500 6.700s13-2.500 13.500-6.500z" fill="url(#gcone)"/>
<ellipse cx="1178.0" cy="470.0" rx="17.0" ry="14.0" fill="#555" opacity="0.12" filter="url(#sh)"/>
<polygon points="1177.500,454 1160,483.500 1187.500,490.500" fill="#f2d20f" stroke="#8a7406" stroke-width="1.200" stroke-linejoin="round"/>
<polygon points="1177.500,454 1187.500,490.500 1194.300,474" fill="#e6c60c" stroke="#8a7406" stroke-width="1.200" stroke-linejoin="round"/>
<ellipse cx="1243.0" cy="470.0" rx="17.0" ry="13.0" fill="#555" opacity="0.12" filter="url(#sh)"/>
<polygon points="1246.500,454.500 1224,478.500 1253.500,484" fill="#2f9a35" stroke="#1d6a22" stroke-width="0.800" stroke-linejoin="round"/>
<polygon points="1246.500,454.500 1253.500,484 1259,468.500" fill="#3cb043" stroke="#1d6a22" stroke-width="0.800" stroke-linejoin="round"/>
<polygon points="1224,478.500 1253.500,484 1252,478 1236,473" fill="#268a2c" opacity="0.600"/>
<ellipse cx="1114.0" cy="545.0" rx="18.0" ry="9.0" fill="#555" opacity="0.12" filter="url(#sh)"/>
<text transform="matrix(0.92 0.20 -0.22 1 1094.5 547)" font-size="15.5" font-weight="bold" font-style="italic" fill="#8e0f18" stroke="#8e0f18" stroke-width="2.2" stroke-linejoin="round" letter-spacing="-0.8">TEXT</text>
<text transform="matrix(0.92 0.20 -0.22 1 1093.5 545.2)" font-size="15.5" font-weight="bold" font-style="italic" fill="#c6212b" stroke="#c6212b" stroke-width="1.3" stroke-linejoin="round" letter-spacing="-0.8">TEXT</text>
<ellipse cx="1178.0" cy="548.0" rx="18.0" ry="12.0" fill="#555" opacity="0.12" filter="url(#sh)"/>
<path d="M1159 553l8-15c3-6 9-8.500 15-7.500 8 1.200 13 6 12.500 14l-8 15.500z" fill="#6fc4d3" stroke="#3f95a6" stroke-width="0.900" stroke-linejoin="round"/>
<path d="M1159 553c2-7 8-11 15-10 7.500 1.200 12 6 12.500 17z" fill="#5ab3c4" stroke="#3f95a6" stroke-width="0.900" stroke-linejoin="round"/>
<ellipse cx="1243.0" cy="550.0" rx="15.0" ry="11.0" fill="#555" opacity="0.12" filter="url(#sh)"/>
<path d="M1228 550a14.200 14.500 0 0 1 28.400 0c0 4-6.400 7.500-14.200 7.500s-14.200-3.500-14.200-7.500z" fill="url(#gmag)"/>
<ellipse cx="1113.0" cy="623.0" rx="15.0" ry="10.0" fill="#555" opacity="0.12" filter="url(#sh)"/>
<ellipse cx="1112.800" cy="621" rx="14" ry="9.700" fill="#1a8fcf"/><ellipse cx="1112.800" cy="619" rx="13" ry="7.500" fill="#2a9fdc"/><ellipse cx="1112.800" cy="620" rx="6.300" ry="2.500" fill="#e9eef3" stroke="#0f6a9f" stroke-width="1"/>
<ellipse cx="1178.0" cy="623.0" rx="15.0" ry="10.0" fill="#555" opacity="0.12" filter="url(#sh)"/>
<path d="M1163.500 618v7a14 7.500 0 0 0 28 0v-7z" fill="#cf6c14"/><ellipse cx="1177.500" cy="618" rx="14" ry="7.500" fill="#ea8424" stroke="#c4640f" stroke-width="0.700"/><ellipse cx="1177.500" cy="617.500" rx="6.500" ry="3.500" fill="#b9590c"/><path d="M1171.300 618.500a6.500 3.500 0 0 0 12.400 0v1.500a6.500 3 0 0 1-12.400 0z" fill="#e07b1d"/>
<ellipse cx="1243.0" cy="623.0" rx="15.0" ry="10.0" fill="#555" opacity="0.12" filter="url(#sh)"/>
<path d="M1228.300 618v6.500a14 8 0 0 0 28 0V618z" fill="#8a5a3c"/><ellipse cx="1242.300" cy="618" rx="14" ry="8" fill="#9a6a4a" stroke="#6f4428" stroke-width="0.800"/><ellipse cx="1242.300" cy="618.500" rx="11.800" ry="6" fill="#e6e3e0" stroke="#6f4428" stroke-width="0.800"/><path d="M1230.500 619a11.800 6 0 0 1 23.600 0c-2-3-6.500-4.300-11.800-4.300s-9.800 1.300-11.800 4.300z" fill="#7a4d31"/>
<ellipse cx="1112.0" cy="705.0" rx="18.0" ry="14.0" fill="#555" opacity="0.13" filter="url(#sh)"/>
<polygon points="1092.700,689.800 1123,695.400 1129.700,705 1123,721 1095,714.500" fill="#2b4690"/>
<polygon points="1123,695.400 1129.700,705 1123,721" fill="#24397a"/>
<ellipse cx="1178.0" cy="702.0" rx="16.0" ry="18.0" fill="#555" opacity="0.09" filter="url(#sh)"/>
<polygon points="1162.900,682.700 1175.600,677.900 1189,680.300 1194,687.500 1191.500,713.700 1180.400,719.800 1166.800,715.300" fill="#2d4a98"/>
<polygon points="1162.900,682.700 1166,690 1180,693 1180.400,719.800 1166.800,715.300" fill="#2a4590"/>
<polygon points="1180,693 1194,687.500 1191.500,713.700 1180.400,719.800" fill="#243c82"/>
<polygon points="1162.900,682.700 1175.600,677.900 1189,680.300 1194,687.500 1180,693 1166,690" fill="#3352a5"/>
<ellipse cx="1243.0" cy="700.0" rx="14.0" ry="13.0" fill="#555" opacity="0.12" filter="url(#sh)"/>
<polygon points="1240,684.500 1253,689.500 1255.500,703 1247,711 1235,709 1229,699.500 1232,689" fill="#d41f2a"/>
<polygon points="1240,684.500 1253,689.500 1245,697 1232,689" fill="#e8323c"/><polygon points="1245,697 1255.500,703 1247,711 1235,709" fill="#c01822"/>
<polygon points="1131.3,747.1 1133.2,751.0 1137.5,751.6 1134.4,754.6 1135.1,758.9 1131.3,756.9 1127.5,758.9 1128.2,754.6 1125.1,751.6 1129.4,751.0" fill="#f8d448" stroke="#f8d448" stroke-width="1.500" stroke-linejoin="round"/>
<polygon points="1108,773 1117,769.500 1121,773" fill="#2c7f95"/>
<ellipse cx="1180.0" cy="773.0" rx="15.0" ry="6.0" fill="#555" opacity="0.12" filter="url(#sh)"/>
<polygon points="1165,773 1165.500,768.500 1172,768 1180.500,764.500 1184,768 1192,768.500 1193,773" fill="#e8cd1a" stroke="#a8900a" stroke-width="0.700"/>
<ellipse cx="1243.0" cy="771.0" rx="16.0" ry="7.0" fill="#555" opacity="0.12" filter="url(#sh)"/>
<path d="M1229 773v-4c0-4 4-6.500 8-6 2.500.3 4 1.500 5.500 1.500s4-1.500 7-1.200c4 .5 6.500 3 6.500 6.700v3z" fill="#a87448" stroke="#7a5230" stroke-width="0.800"/>
<rect x="1270.700" y="204" width="5.300" height="497" rx="2.600" fill="#b8b8b9"/>
<rect x="1064" y="423" width="13.500" height="33" rx="1.500" fill="#fff"/><rect x="1064" y="423" width="16" height="33" rx="1.500" fill="#fdfdfe" opacity="0.900"/>
<path d="M1072.200 431.700l4.700 7.900-4.700 7.900" fill="none" stroke="#111" stroke-width="1.700" stroke-linejoin="miter"/>
</svg>

<div class="abs" style="left:1001px;top:725px;width:66.500px;height:16px;background:#fff;border:1px solid #eef0f3;border-radius:2px;font-size:9.500px;line-height:14px;color:#8b909a;text-align:center;letter-spacing:0.150px">Settings</div>
<div class="abs" style="left:965.500px;top:750px;font-size:9.100px;line-height:14px;color:#4b505b;white-space:nowrap;-webkit-text-stroke:0.200px #4b505b">Snap Grid</div>
<div class="abs" style="left:1010.500px;top:749.500px;width:56.500px;height:15px;background:#fff;border:1px solid #eef0f3;border-radius:2px;font-size:8.800px;line-height:13.500px;color:#4b505b;padding-left:7px;white-space:nowrap">1.0 mm</div>
<svg class="abs" style="left:1054px;top:753px" width="10" height="8" viewBox="0 0 10 8"><path d="M2.500 5.600l2.300-2.700 2.300 2.700z" fill="#222"/></svg>

</body>
</html>
